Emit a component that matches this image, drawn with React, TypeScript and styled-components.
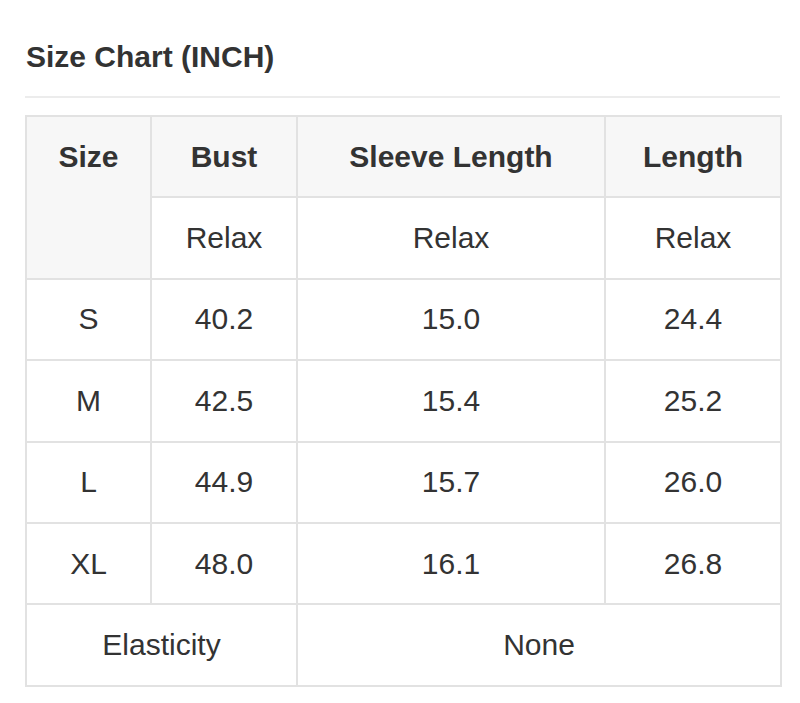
import React from "react";
import styled, { createGlobalStyle } from "styled-components";

const Global = createGlobalStyle`
  html, body { margin: 0; padding: 0; background: #fff; }
  body { font-family: "Liberation Sans", Arial, sans-serif; color: #333; }
`;

const Page = styled.div`
  padding: 40px 20px 0 25px;
  width: 800px;
  box-sizing: border-box;
`;

const Title = styled.h2`
  margin: 0 0 0 1px;
  font-size: 30px;
  line-height: 34px;
  font-weight: 700;
  color: #333;
`;

const Divider = styled.div`
  height: 2px;
  background: #ececec;
  margin: 22px 0 17px;
`;

const Table = styled.table`
  width: 755px;
  border-collapse: collapse;
  table-layout: fixed;
  border: 2px solid #e2e2e2;
`;

const Cell = styled.td<{ $head?: boolean; $shade?: boolean; $top?: boolean }>`
  border: 2px solid #e2e2e2;
  height: 79.4px;
  padding: 0;
  text-align: center;
  vertical-align: ${(p) => (p.$top ? "top" : "middle")};
  font-size: 30px;
  font-weight: ${(p) => (p.$head ? 700 : 400)};
  background: ${(p) => (p.$shade ? "#f7f7f7" : "#fff")};
  color: #333;
`;

const TopLabel = styled.div`
  height: 79px;
  line-height: 79px;
`;

const rows = [
  ["S", "40.2", "15.0", "24.4"],
  ["M", "42.5", "15.4", "25.2"],
  ["L", "44.9", "15.7", "26.0"],
  ["XL", "48.0", "16.1", "26.8"],
];

export default function App() {
  return (
    <>
      <Global />
      <Page>
        <Title>Size Chart (INCH)</Title>
        <Divider />
        <Table>
          <colgroup>
            <col style={{ width: 125 }} />
            <col style={{ width: 146 }} />
            <col style={{ width: 308 }} />
            <col style={{ width: 176 }} />
          </colgroup>
          <tbody>
            <tr>
              <Cell $head $shade $top rowSpan={2}>
                <TopLabel>Size</TopLabel>
              </Cell>
              <Cell $head $shade>Bust</Cell>
              <Cell $head $shade>Sleeve Length</Cell>
              <Cell $head $shade>Length</Cell>
            </tr>
            <tr>
              <Cell>Relax</Cell>
              <Cell>Relax</Cell>
              <Cell>Relax</Cell>
            </tr>
            {rows.map((r) => (
              <tr key={r[0]}>
                {r.map((v, i) => (
                  <Cell key={i}>{v}</Cell>
                ))}
              </tr>
            ))}
            <tr>
              <Cell colSpan={2}>Elasticity</Cell>
              <Cell colSpan={2}>None</Cell>
            </tr>
          </tbody>
        </Table>
      </Page>
    </>
  );
}
